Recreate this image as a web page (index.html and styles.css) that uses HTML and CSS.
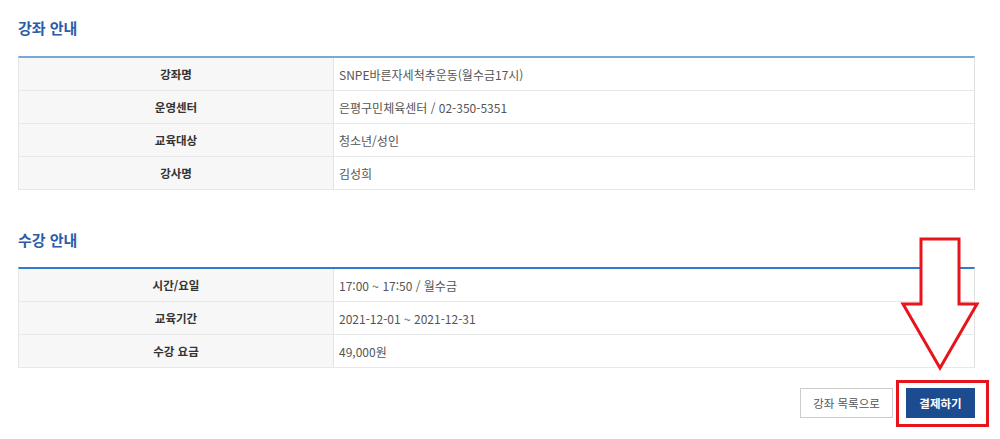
FILE: index.html
```html
<!DOCTYPE html>
<html lang="ko">
<head>
<meta charset="utf-8">
<title>강좌 안내</title>
<link rel="stylesheet" href="styles.css">
</head>
<body>
<div class="page">
  <section class="section section-course">
    <h2 class="section-title">강좌 안내</h2>
    <div class="info info-light">
      <div class="info-label">강좌명</div>
      <div class="info-value">SNPE바른자세척추운동(월수금17시)</div>
      <div class="info-label">운영센터</div>
      <div class="info-value">은평구민체육센터 / 02-350-5351</div>
      <div class="info-label">교육대상</div>
      <div class="info-value">청소년/성인</div>
      <div class="info-label">강사명</div>
      <div class="info-value">김성희</div>
    </div>
  </section>

  <section class="section section-class">
    <h2 class="section-title">수강 안내</h2>
    <div class="info info-strong">
      <div class="info-label">시간/요일</div>
      <div class="info-value">17:00 ~ 17:50 / 월수금</div>
      <div class="info-label">교육기간</div>
      <div class="info-value">2021-12-01 ~ 2021-12-31</div>
      <div class="info-label">수강 요금</div>
      <div class="info-value">49,000원</div>
    </div>
  </section>

  <div class="actions">
    <button class="btn btn-outline" type="button">강좌 목록으로</button>
    <button class="btn btn-primary" type="button">결제하기</button>
  </div>
</div>

<div class="mark-box"></div>
<svg class="mark-arrow" width="80" height="138" viewBox="0 0 80 138" aria-hidden="true">
  <polygon points="21,4 59,4 59,69 77,69 40,133 3,69 21,69" fill="#ffffff" stroke="#e8141c" stroke-width="3" stroke-linejoin="miter"/>
</svg>
</body>
</html>
```

FILE: styles.css
```css
html, body {
  margin: 0;
  padding: 0;
  background: #ffffff;
}

body {
  font-family: "Noto Sans CJK KR", "Noto Sans", sans-serif;
  color: #444;
  overflow: hidden;
}

.page {
  padding: 16px 25px 0 18px;
}

.section-title {
  margin: 0 0 16px;
  font-size: 15px;
  line-height: 24px;
  font-weight: 700;
  color: #2b5ca8;
}

.section-class {
  margin-top: 38px;
}

.section-class .section-title {
  margin-bottom: 15px;
}

.info {
  display: grid;
  grid-template-columns: 315px 1fr;
  border-top: 2px solid #7ba7d6;
  border-left: 1px solid #e6e6e6;
  border-right: 1px solid #e0e0e0;
}

.info-strong {
  border-top-color: #2f7bd0;
}

.info-label,
.info-value {
  box-sizing: border-box;
  height: 33px;
  border-bottom: 1px solid #e8e8e8;
  display: flex;
  align-items: center;
}

.info-label {
  justify-content: center;
  background: #f7f7f7;
  border-right: 1px solid #e3e3e3;
  font-size: 11.5px;
  font-weight: 700;
  color: #333;
}

.info-value {
  padding-left: 5px;
  font-size: 12px;
  color: #555;
}

.actions {
  margin-top: 20px;
  display: flex;
  justify-content: flex-end;
  gap: 13px;
}

.btn {
  box-sizing: border-box;
  height: 30px;
  padding: 0;
  font-family: "Noto Sans CJK KR", "Noto Sans", sans-serif;
  font-size: 11.5px;
  cursor: pointer;
}

.btn-outline {
  width: 93px;
  background: #ffffff;
  border: 1px solid #cccccc;
  color: #555;
}

.btn-primary {
  width: 69px;
  background: #1c4b8f;
  border: 1px solid #1c4b8f;
  color: #ffffff;
  font-weight: 700;
}

.mark-box {
  position: absolute;
  left: 896px;
  top: 380px;
  width: 87px;
  height: 41px;
  border: 3px solid #e8141c;
}

.mark-arrow {
  position: absolute;
  left: 900px;
  top: 235px;
}
```
